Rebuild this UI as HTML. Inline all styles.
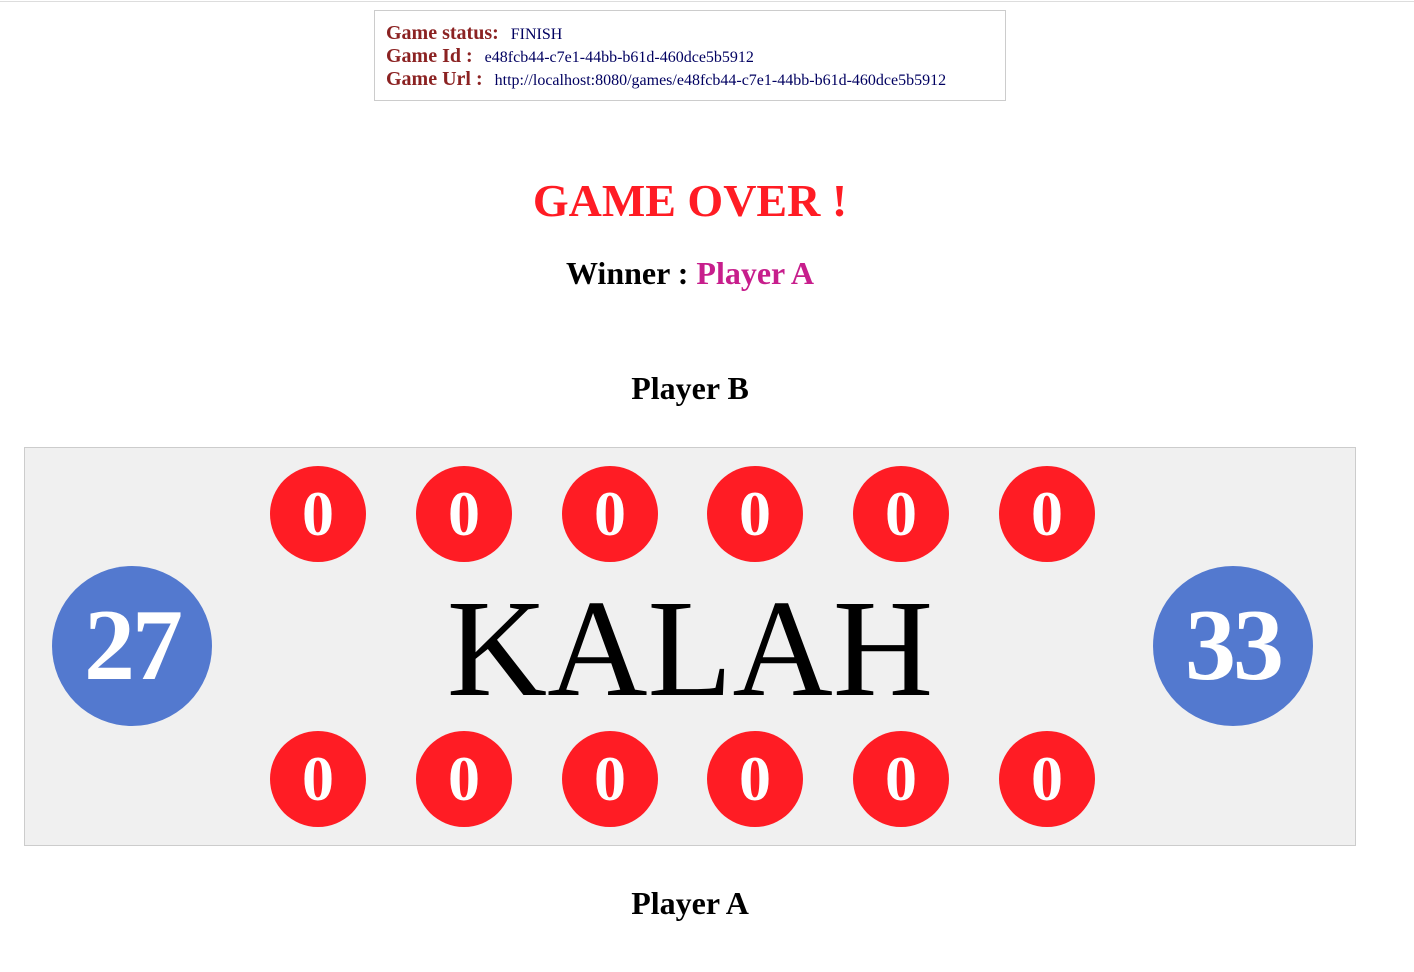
<!DOCTYPE html>
<html><head><style>
body{margin:0;width:1414px;height:972px;background:#fff;font-family:"Liberation Serif",serif;position:relative;overflow:hidden}
.topline{position:absolute;left:0;top:1px;width:1414px;height:1px;background:#ddd}
.info{position:absolute;left:374px;top:10px;width:632px;height:91px;border:1px solid #ccc;box-sizing:border-box}
.row{position:absolute;left:11px;white-space:nowrap}
.lab{color:#8b2222;font-weight:bold;font-size:20px}
.val{color:#000060;font-size:16px}
.c{position:absolute;left:0;width:1380px;text-align:center;font-weight:bold;white-space:nowrap}
.board{position:absolute;left:24px;top:447px;width:1332px;height:399px;background:#f0f0f0;border:1px solid #ccc;box-sizing:border-box}
.pit{position:absolute;width:96px;height:96px;border-radius:50%;background:#ff1c24;color:#fff;font-weight:bold;font-size:64px;line-height:96px;text-align:center}
.store{position:absolute;width:160px;height:160px;border-radius:50%;background:#5379cf;color:#fff;font-weight:bold;font-size:102px;line-height:160px;text-align:center;letter-spacing:-3px}
.kalah{position:absolute;left:0;width:1380px;top:564px;text-align:center;font-size:139px;line-height:170px}
</style></head><body>
<div class="topline"></div>
<div class="info">
<div class="row" style="top:11px"><span class="lab">Game status:</span>&nbsp;&nbsp;&nbsp;<span class="val">FINISH</span></div>
<div class="row" style="top:34px"><span class="lab">Game Id :</span>&nbsp;&nbsp;&nbsp;<span class="val">e48fcb44-c7e1-44bb-b61d-460dce5b5912</span></div>
<div class="row" style="top:57px"><span class="lab">Game Url :</span>&nbsp;&nbsp;&nbsp;<span class="val">http://localhost:8080/games/e48fcb44-c7e1-44bb-b61d-460dce5b5912</span></div>
</div>
<div class="c" style="top:174px;font-size:46px;color:#ff1c24">GAME OVER !</div>
<div class="c" style="top:255px;font-size:32px">Winner : <span style="color:#c71e8c">Player A</span></div>
<div class="c" style="top:370px;font-size:32px">Player B</div>
<div class="board"></div>
<div class="pit" style="left:270px;top:466px">0</div>
<div class="pit" style="left:416px;top:466px">0</div>
<div class="pit" style="left:562px;top:466px">0</div>
<div class="pit" style="left:707px;top:466px">0</div>
<div class="pit" style="left:853px;top:466px">0</div>
<div class="pit" style="left:999px;top:466px">0</div>
<div class="pit" style="left:270px;top:731px">0</div>
<div class="pit" style="left:416px;top:731px">0</div>
<div class="pit" style="left:562px;top:731px">0</div>
<div class="pit" style="left:707px;top:731px">0</div>
<div class="pit" style="left:853px;top:731px">0</div>
<div class="pit" style="left:999px;top:731px">0</div>
<div class="store" style="left:52px;top:566px">27</div>
<div class="store" style="left:1153px;top:566px">33</div>
<div class="kalah">KALAH</div>
<div class="c" style="top:885px;font-size:32px">Player A</div>
</body></html>
